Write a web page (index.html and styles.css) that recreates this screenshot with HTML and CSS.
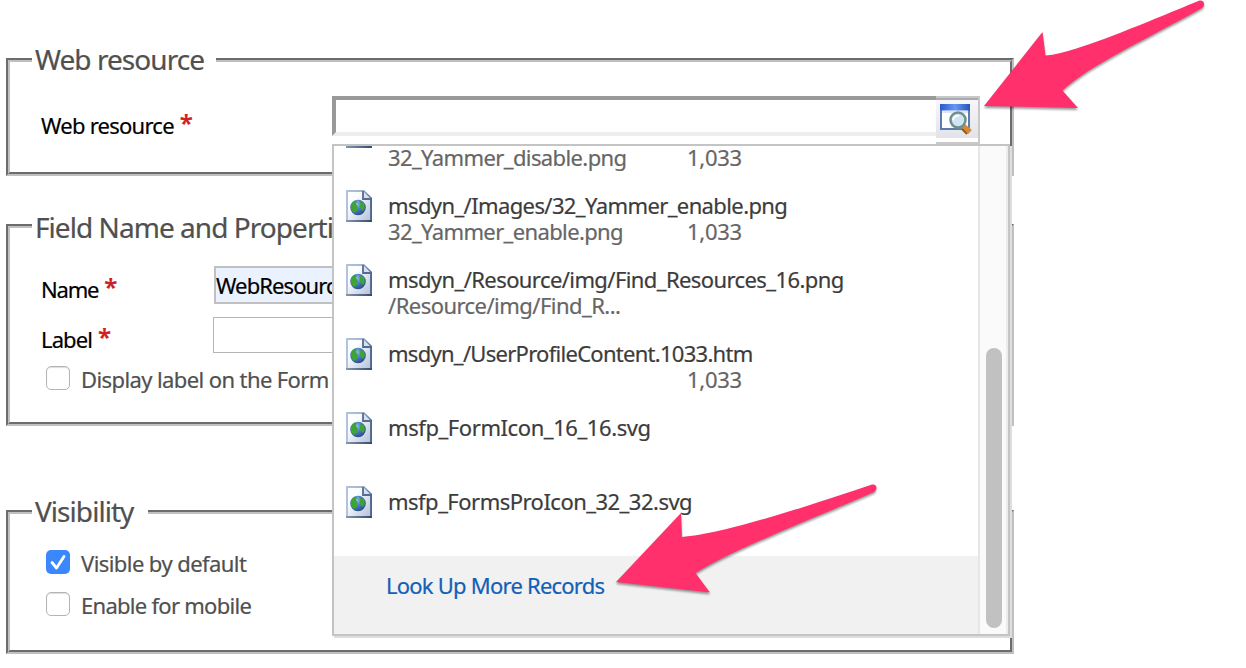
FILE: index.html
```
<!DOCTYPE html>
<html lang="en">
<head>
<meta charset="utf-8">
<title>Web resource properties</title>
<link rel="stylesheet" href="styles.css">
</head>
<body>
<svg class="defs" width="0" height="0" aria-hidden="true">
  <defs>
    <linearGradient id="page" x1="0" y1="0" x2="1" y2="1"><stop offset=".3" stop-color="#fcfdff"/><stop offset="1" stop-color="#b4c2dc"/></linearGradient>
    <linearGradient id="edge" x1="0" y1="0" x2="1" y2="0"><stop offset="0" stop-color="#b4c4dc"/><stop offset=".6" stop-color="#a3b5d2"/><stop offset="1" stop-color="#4c6488"/></linearGradient>
    <radialGradient id="globe" cx=".35" cy=".3" r=".75"><stop offset="0" stop-color="#a5c8fa"/><stop offset=".5" stop-color="#4a7acb"/><stop offset="1" stop-color="#2a4a86"/></radialGradient>
    <linearGradient id="bar" x1="0" y1="0" x2="1" y2="0"><stop offset="0" stop-color="#2858ce"/><stop offset=".5" stop-color="#6795f2"/><stop offset="1" stop-color="#2454b8"/></linearGradient>
    <linearGradient id="base" x1="0" y1="0" x2="1" y2="0"><stop offset="0" stop-color="#8796b0"/><stop offset="1" stop-color="#344a6b"/></linearGradient>
    <filter id="soft" x="-20%" y="-20%" width="140%" height="140%"><feGaussianBlur stdDeviation=".6"/></filter>
    <symbol id="file" viewBox="0 0 26 32">
      <path d="M0 0H18L26 8V32H0Z" fill="url(#edge)"/>
      <path d="M2 2H17V10H24V30H2Z" fill="url(#page)"/>
      <path d="M17 1L25 9H17Z" fill="#d5e0f2"/>
      <path d="M17 1V9H25" fill="none" stroke="#566c8e" stroke-width="1.800"/>
      <path d="M0 30H26V32H0Z" fill="url(#base)"/>
      <g filter="url(#soft)">
        <circle cx="12" cy="17.500" r="7.800" fill="url(#globe)"/>
        <path d="M5 14Q8 9 11 11L10 14L12 17L11 21L8 23Q4 20 5 14M14 12L18 13Q20 18 17 21L14 18Z" fill="#3da435"/>
      </g>
    </symbol>
  </defs>
</svg>
<main class="form">
  <fieldset class="group group-resource">
    <legend class="g1"><span>Web resource</span></legend>
    <div class="field"><label class="name l1">Web resource</label><span class="req">*</span></div>
    <div class="lookup">
      <div class="lookup-input"></div>
      <button class="lookup-btn" aria-label="Look up">
        <svg width="34" height="32" viewBox="0 0 34 32">
          <path d="M2 2H30V26H2Z" fill="#fff" stroke="#5c7dac" stroke-width="2"/>
          <path d="M1 1H31V7.500H1Z" fill="url(#bar)"/>
          <path d="M3 8H29V10H3Z" fill="#dce6f6"/>
          <g filter="url(#soft)">
            <path d="M23.500 22.500L31 29" stroke="#d88a2c" stroke-width="5.500"/>
            <path d="M23 26L28 31" stroke="#8b5a2a" stroke-width="2"/>
            <circle cx="19" cy="17" r="7.500" fill="#d0e4f4" stroke="#6f8f8b" stroke-width="2.500"/>
            <path d="M14 17Q15 12 20 13" fill="none" stroke="#fff" stroke-width="2"/>
          </g>
        </svg>
      </button>
    </div>
  </fieldset>

  <fieldset class="group group-name">
    <legend class="g2"><span>Field Name and Properties</span></legend>
    <div class="row row-name"><div class="cell"><label class="name l2">Name</label><span class="req">*</span></div><div class="box box-name l3">WebResource_</div></div>
    <div class="row row-label"><div class="cell"><label class="name l4">Label</label><span class="req">*</span></div><div class="box box-label"></div></div>
    <div class="check row-display"><span class="tick"></span><span class="c1">Display label on the Form</span></div>
  </fieldset>

  <fieldset class="group group-vis">
    <legend class="g3"><span>Visibility</span></legend>
    <div class="check row-visible"><span class="tick on"><svg width="24" height="24" viewBox="0 0 24 24"><path d="M6 12.500L10.500 18L18 6.500" fill="none" stroke="#fff" stroke-width="2.800" stroke-linecap="round" stroke-linejoin="round"/></svg></span><span class="c2">Visible by default</span></div>
    <div class="check"><span class="tick"></span><span class="c3">Enable for mobile</span></div>
  </fieldset>
</main>

<section class="menu">
  <div class="menu-body">
    <div class="list">
      <div class="item"><svg class="ico"><use href="#file"/></svg><div class="txt"><b>&nbsp;</b><p><span class="s1">32_Yammer_disable.png</span><i>1,033</i></p></div></div>
      <div class="item"><svg class="ico"><use href="#file"/></svg><div class="txt"><b class="t1">msdyn_/Images/32_Yammer_enable.png</b><p><span class="s2">32_Yammer_enable.png</span><i>1,033</i></p></div></div>
      <div class="item"><svg class="ico"><use href="#file"/></svg><div class="txt"><b class="t2">msdyn_/Resource/img/Find_Resources_16.png</b><p><span class="s3">/Resource/img/Find_R...</span></p></div></div>
      <div class="item"><svg class="ico"><use href="#file"/></svg><div class="txt"><b class="t3">msdyn_/UserProfileContent.1033.htm</b><p><span></span><i>1,033</i></p></div></div>
      <div class="item"><svg class="ico"><use href="#file"/></svg><div class="txt"><b class="t4">msfp_FormIcon_16_16.svg</b></div></div>
      <div class="item"><svg class="ico"><use href="#file"/></svg><div class="txt"><b class="t5">msfp_FormsProIcon_32_32.svg</b></div></div>
    </div>
    <div class="more"><a class="m1">Look Up More Records</a></div>
  </div>
  <div class="scroll"><div class="thumb"></div></div>
</section>

<svg class="arrows" width="1246" height="668" viewBox="0 0 1246 668" fill="#ff306c">
  <path d="M984 106L1042.500 32L1045.500 55.500C1072 54 1140 25 1199 .700C1204 -.500 1206 5 1202 8C1145 40 1090 65 1062.500 90.500L1078 108Z"/>
  <path d="M616 582L681 513L682 537C725 534 820 502 872 484.500C877 483.500 878 489 874 492C820 516 740 546 695.500 573L710 592.500Z"/>
</svg>
</body>
</html>
```
FILE: styles.css
```
* { box-sizing: border-box; }
body { margin: 0; width: 1246px; height: 668px; overflow: hidden; position: relative; background: #fff; font: 22px/26px "Noto Sans", sans-serif; color: #3c3c3c; -webkit-text-stroke: .2px; }
.defs { position: absolute; }
.form { padding: 45px 0 0 6px; width: 1014px; }
.group { margin: 0; padding: 0 0 0 22px; border: 4px groove #c0c0c0; min-width: 0; }
.group-resource { height: 131px; display: block; }
.group-name { height: 215px; margin-top: 35px; }
.group-vis { height: 157px; margin-top: 71px; }
legend { padding: 0 12px 0 3px; height: 30px; line-height: 28px; font-size: 28px; color: #505050; white-space: nowrap; letter-spacing: -.95px; }
.g1 { width: 184px; }
.g2 { line-height: 32px; }
.g3 { width: 116px; }
.name { color: #000; white-space: nowrap; }
.l1 { letter-spacing: -.75px; }
.l2 { letter-spacing: -1.2px; }
.l3 { letter-spacing: -.9px; }
.l4 { letter-spacing: -.9px; }
.req { color: #d22020; font-size: 24px; font-weight: 600; line-height: 22px; margin-left: 6px; }
.field { float: left; display: flex; padding: 37px 0 0 9px; }
.lookup { float: right; display: flex; margin: 21px 30px 0 0; width: 648px; height: 48px; }
.lookup-input { width: 604px; height: 40px; border: 4px solid #999; border-bottom-color: #eee; border-right: 0; }
.lookup-btn { width: 44px; height: 48px; padding: 0 0 0 3px; border: solid #c8c8c8; border-width: 2px 2px 2px 0; background: linear-gradient(#a8a8b2 2px, #f7f7fa 2px, #e2e2ea 40px, #fff 40px); display: flex; align-items: flex-start; }
.lookup-btn svg { margin-top: 5px; }
.row { display: flex; padding-left: 9px; }
.cell { width: 172px; display: flex; }
.row-name { padding-top: 25px; }
.row-name .cell { padding-top: 10px; }
.row-label { padding-top: 13px; }
.row-label .cell { padding-top: 9px; }
.box { width: 500px; color: #000; white-space: nowrap; }
.box-name { margin-left: 1px; height: 38px; border: 2px solid #c0c0c0; background: #eaf1ff; line-height: 34px; }
.box-label { height: 36px; border: 1px solid #b5b5b5; }
.check { display: flex; padding-left: 14px; gap: 11px; height: 42px; color: #505050; white-space: nowrap; }
.c1 { letter-spacing: -.6px; }
.c2 { letter-spacing: -.57px; }
.c3 { letter-spacing: -.72px; }
.row-display { padding-top: 13px; }
.row-visible { padding-top: 23px; height: 65px; }
.tick { width: 24px; height: 24px; border: 1px solid #b4b4b4; border-radius: 5px; background: #fff; box-shadow: inset 0 1px 1px #ddd; flex: none; }
.tick.on { border: 0; background: #3b87fd; box-shadow: none; }
.menu { position: absolute; left: 332px; top: 144px; width: 678px; height: 492px; border: 2px solid #c4c4c4; background: #fff; box-shadow: 2px 2px #ddd; display: flex; }
.menu-body { width: 644px; overflow: hidden; }
.list { height: 410px; overflow: hidden; display: flex; flex-direction: column; justify-content: flex-end; }
.item { flex: none; height: 74px; padding-left: 12px; display: flex; gap: 16px; }
.item:last-child { height: 70px; }
.ico { width: 26px; height: 32px; flex: none; }
.txt { white-space: nowrap; padding-top: 2px; }
.txt b { font-weight: 400; display: block; height: 26px; }
.txt p { margin: 0; display: flex; color: #666; }
.txt p span { width: 299px; }
.txt i { font-style: normal; letter-spacing: -.3px; }
.txt .t1 { letter-spacing: -.61px; }
.txt .t2 { letter-spacing: -.59px; }
.txt .t3 { letter-spacing: -.72px; }
.txt .t4 { letter-spacing: -.42px; }
.txt .t5 { letter-spacing: -.52px; }
.txt .s1 { letter-spacing: -.61px; }
.txt .s2 { letter-spacing: -.63px; }
.txt .s3 { letter-spacing: -.54px; }
.more { height: 78px; background: #f1f1f1; padding: 16px 0 0 52px; color: #1160b7; letter-spacing: -.77px; }
.scroll { width: 30px; border: solid #e6e6e6; border-width: 0 2px; border-right-color: #ececec; background: #fafafa; padding: 202px 0 0 6px; }
.thumb { width: 16px; height: 280px; border-radius: 8px; background: #c1c1c1; }
.arrows { position: absolute; left: 0; top: 0; filter: drop-shadow(0 2px 1px rgba(0,0,0,.4)); pointer-events: none; }
```
